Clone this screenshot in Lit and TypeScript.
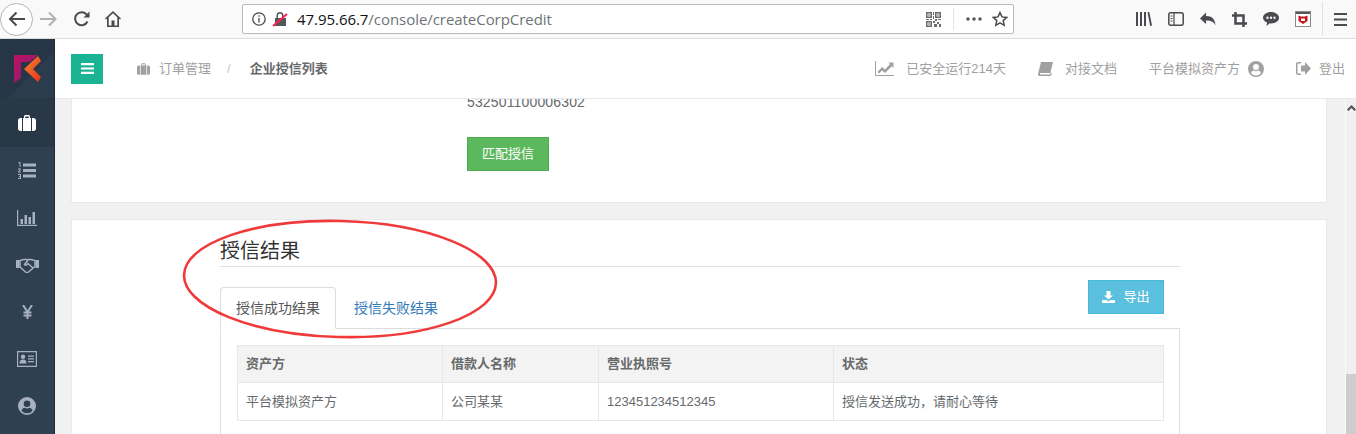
import { LitElement, html, css, svg } from "lit";
import { customElement } from "lit/decorators.js";

const icon = (w: number, h: number, vb: string, body: unknown) =>
  html`<svg width=${w} height=${h} viewBox=${vb} fill="currentColor">${body}</svg>`;

const briefcase = (w: number, h: number) =>
  icon(w, h, "0 0 18 16", svg`<path d="M6 3V1.5C6 .7 6.7 0 7.5 0h3c.8 0 1.5.7 1.5 1.5V3h1v13H5V3zM7.2 3h3.6V1.4H7.2zM4 3v13H2.5C1.1 16 0 14.9 0 13.500V5.500C0 4.100 1.100 3 2.500 3zM14 3h1.500C16.900 3 18 4.100 18 5.500v8c0 1.400-1.100 2.500-2.500 2.500H14z"/>`);

const userCircle = (s: number) =>
  icon(s, s, "0 0 18 18", svg`<path fill-rule="evenodd" d="M9 0a9 9 0 1 1 0 18A9 9 0 0 1 9 0zm0 3.500a3.300 3.300 0 1 0 0 6.600 3.300 3.300 0 0 0 0-6.600zM3.500 13.700A7 7 0 0 0 9 16.200a7 7 0 0 0 5.500-2.500c-.5-1.700-1.500-2.700-3-2.900-.7.500-1.600.8-2.500.8s-1.800-.3-2.500-.8c-1.500.2-2.500 1.200-3 2.900z"/>`);

@customElement("browser-bar")
export class BrowserBar extends LitElement {
  static override styles = css`
    :host {
      display: flex;
      align-items: center;
      height: 38px;
      background: #f9f9fa;
      border-bottom: 1px solid #dcdcdc;
      color: #4a4a4f;
      flex: none;
    }
    svg {
      display: block;
      flex: none;
    }
    .back {
      width: 31px;
      height: 31px;
      margin-left: 0;
      border: 1px solid #b4b4b4;
      border-radius: 50%;
      background: #fff;
      display: flex;
      align-items: center;
      justify-content: center;
      flex: none;
    }
    .fwd {
      margin-left: 7px;
      color: #b1b1b3;
    }
    .reload {
      margin-left: 17px;
    }
    .home {
      margin-left: 15px;
    }
    .url {
      margin-left: 121px;
      width: 772px;
      height: 30px;
      box-sizing: border-box;
      background: #fff;
      border: 1px solid #b9b9b9;
      border-radius: 2px;
      display: flex;
      align-items: center;
      flex: none;
    }
    .info {
      margin-left: 9px;
    }
    .lock {
      margin-left: 6px;
    }
    .addr {
      margin-left: 9px;
      font: 15px/28px "Open Sans", "Noto Sans", sans-serif;
      letter-spacing: -0.05px;
      color: #6f7377;
      flex: 1;
    }
    .addr b {
      font-weight: 400;
      color: #111;
    }
    .sep {
      width: 1px;
      height: 22px;
      background: #e2e2e2;
      margin: 0 12px 0 12px;
    }
    .star {
      margin: 0 5px 0 10px;
    }
    .tools {
      margin-left: 122px;
      display: flex;
      align-items: center;
      gap: 16px;
    }
    .bar-sep {
      width: 1px;
      height: 34px;
      background: #e0e0e1;
      margin-left: 11px;
    }
    .menu {
      margin-left: 11px;
    }
  `;

  override render() {
    return html`
      <div class="back">
        <svg width="18" height="16" viewBox="0 0 18 16" fill="none" stroke="currentColor" stroke-width="2"><path d="M17 8H2M8.500 1.500 2 8l6.500 6.500"/></svg>
      </div>
      <svg class="fwd" width="17" height="16" viewBox="0 0 17 16" fill="none" stroke="currentColor" stroke-width="2"><path d="M0 8h15M9 1.500 15.500 8 9 14.500"/></svg>
      <svg class="reload" width="16" height="16" viewBox="0 0 16 16" fill="none" stroke="currentColor" stroke-width="2"><path d="M13.500 10.500A6.500 6.500 0 1 1 12.500 3.300L15 5.500"/><path d="M15.500 .5v6h-6z" fill="currentColor" stroke="none"/></svg>
      <svg class="home" width="16" height="16" viewBox="0 0 16 16" fill="currentColor"><path fill-rule="evenodd" d="M8 0 16 7.500l-1 1-1-1V16H2V7.500l-1 1-1-1zM8 2.200 3.700 6.200v8.200h2.800V9.500h3v4.900h2.800V6.200z"/></svg>
      <div class="url">
        <svg class="info" width="14" height="14" viewBox="0 0 14 14" fill="none" stroke="currentColor" stroke-width="1.300"><circle cx="7" cy="7" r="6.200"/><path d="M7 6v4.500M7 3.200v1.500"/></svg>
        <svg class="lock" width="16" height="16" viewBox="0 0 16 16"><path fill="#55565a" d="M3 7h1.500V4.500a3.500 3.500 0 0 1 7 0V7H14v8H3zM6 7h4V4.500a2 2 0 0 0-4 0z"/><path stroke="#f9244f" stroke-width="2" d="M1 15 15 3"/></svg>
        <span class="addr"><b>47.95.66.7</b>/console/createCorpCredit</span>
        <svg width="15" height="15" viewBox="0 0 15 15" fill="#6b6b6f"><path fill-rule="evenodd" d="M0 0h6v6H0zm1.500 1.500v3h3v-3zM9 0h6v6H9zm1.500 1.500v3h3v-3zM0 9h6v6H0zm1.500 1.500v3h3v-3z"/><path d="M2.300 2.300h1.400v1.400H2.300zM11.300 2.300h1.400v1.400h-1.400zM2.300 11.300h1.400v1.400H2.300zM7 0h1v3H7zM7 4h1v3H7zM0 7h3v1H0zM4 7h2v1H4zM9 7h2v2H9zM12 7h3v1h-3zM7 9h2v2H7zM11 10h2v2h-2zM13 12h2v3h-2zM8 12h3v3H8z"/></svg>
        <span class="sep"></span>
        <svg width="16" height="4" viewBox="0 0 16 4" fill="#5b5b5f"><circle cx="2" cy="2" r="1.800"/><circle cx="8" cy="2" r="1.800"/><circle cx="14" cy="2" r="1.800"/></svg>
        <svg class="star" width="16" height="16" viewBox="0 0 16 16" fill="none" stroke="currentColor" stroke-width="1.500"><path d="M8 1.500l2 4.400 4.800.5-3.600 3.200 1 4.700L8 11.900l-4.200 2.400 1-4.700L1.200 6.400 6 5.900z"/></svg>
      </div>
      <div class="tools">
        <svg width="16" height="14" viewBox="0 0 16 14" fill="currentColor"><path d="M0 0h2v14H0zM4 0h2v14H4zM8 0h2v14H8zM11.500.3 13.300 0 16 13.500l-1.800.4z"/></svg>
        <svg width="16" height="14" viewBox="0 0 16 14" fill="none" stroke="currentColor" stroke-width="1.500"><rect x=".8" y=".8" width="14.400" height="12.400" rx="2"/><path d="M6 1v12M2.500 4H4.500M2.500 6.500H4.500M2.500 9H4.500" stroke-width="1.200"/></svg>
        <svg width="16" height="14" viewBox="0 0 16 14" fill="currentColor"><path d="M6 0v3.500c6 0 9 3 9.500 9.500-1.500-3.500-4-5-9.500-5v3.500L0 6z" transform="translate(0 .5)"/></svg>
        <svg width="15" height="15" viewBox="0 0 15 15" fill="none" stroke="currentColor" stroke-width="2.500"><path d="M3.500 0v11.500H15M0 3.500h11.500V15"/></svg>
        <svg width="16" height="14" viewBox="0 0 16 14" fill="currentColor"><path fill-rule="evenodd" d="M8 0c4.400 0 8 2.500 8 5.700s-3.600 5.700-8 5.700l-1.200-.1L3.500 14l.6-3.500C1.700 9.500 0 7.700 0 5.700 0 2.500 3.600 0 8 0zM4.500 4.500a1.200 1.200 0 1 0 0 2.400 1.200 1.200 0 0 0 0-2.400zm3.500 0a1.200 1.200 0 1 0 0 2.400 1.200 1.200 0 0 0 0-2.400zm3.500 0a1.200 1.200 0 1 0 0 2.400 1.200 1.200 0 0 0 0-2.400z"/></svg>
        <svg width="16" height="16" viewBox="0 0 16 16"><rect x=".5" y=".5" width="15" height="15" fill="#fff" stroke="#8a8a8e"/><rect x="1" y="1" width="14" height="2" fill="#55565a"/><path fill="#c5161d" d="M3.500 4.500 6 5.500h4l2.500-1V10L8 13 3.500 10zM6 7.500V10h4V7.500z"/></svg>
      </div>
      <span class="bar-sep"></span>
      <svg class="menu" width="13" height="13" viewBox="0 0 13 13" fill="currentColor"><path d="M0 0h13v2H0zM0 5.500h13v2H0zM0 11h13v2H0z"/></svg>
    `;
  }
}

@customElement("side-nav")
export class SideNav extends LitElement {
  static override styles = css`
    :host {
      display: block;
      width: 55px;
      box-sizing: border-box;
      flex: none;
      background: #2f4050;
      border-right: 1px solid #1f2c38;
      color: #a7b1c2;
    }
    .logo {
      height: 59px;
      background: linear-gradient(135deg, #263646 60%, #2b3c4c 60%);
      display: flex;
      align-items: center;
      justify-content: center;
    }
    .item {
      height: 47px;
      display: flex;
      align-items: center;
      justify-content: center;
    }
    .active {
      height: 49px;
      background: #293846;
      color: #fff;
    }
  `;

  override render() {
    return html`
      <div class="logo">
        <svg width="28" height="28" viewBox="0 0 28 28">
          <defs>
            <linearGradient id="lp" x1="0" y1="0" x2="1" y2="1"><stop offset="0" stop-color="#c0125f"/><stop offset="1" stop-color="#7f1d78"/></linearGradient>
            <linearGradient id="lo" x1="0" y1="0" x2="1" y2="1"><stop offset="0" stop-color="#f58a2a"/><stop offset="1" stop-color="#e8301e"/></linearGradient>
          </defs>
          <path fill="url(#lp)" d="M1 0h24l-8 7H8v16l-7 5z"/>
          <path fill="url(#lo)" d="M25 1 28 6l-8 8 8 8-3 5L11 14z"/>
        </svg>
      </div>
      <div class="item active">${briefcase(18, 16)}</div>
      <div class="item">
        <svg width="18" height="17" viewBox="0 0 18 17" fill="currentColor"><path d="M5 1.500h13v3H5zM5 7h13v3H5zM5 12.500h13v3H5zM.5 0h2v5h-1V1H.5zM0 6.500h3v1L1.200 9.500H3v1H0v-1L2 7.500H0zM0 12h3v5H0v-1h2v-1H1v-1h1v-1H0z"/></svg>
      </div>
      <div class="item">
        <svg width="20" height="16" viewBox="0 0 20 16" fill="currentColor"><path d="M0 0h1.200v14.800H20V16H0zM3.500 9H6v5H3.500zM7.500 5H10v9H7.500zM11.500 7H14v7h-2.500zM15.500 2H18v12h-2.500z"/></svg>
      </div>
      <div class="item">
        <svg width="23" height="16" viewBox="0 0 23 16" fill="none" stroke="currentColor" stroke-width="1.500"><path d="M4 3.500 8 2.500h2.500l1 .5 1-.5H15l4 1v6l-6.500 5.500c-1 .7-2 .7-3 0L4 10z"/><path d="M12 3 8.500 7.500c1 1.200 2 .8 3.500-1l5 4.500"/><path fill="currentColor" stroke="none" d="M0 3h3.500v8H0zM19.500 3H23v8h-3.500z"/></svg>
      </div>
      <div class="item">
        <svg width="11" height="14" viewBox="0 0 11 14" fill="none" stroke="currentColor" stroke-width="2"><path d="M1 0 5.500 7 10 0M5.500 7v7M1.500 7.500h8M1.500 10.500h8"/></svg>
      </div>
      <div class="item">
        <svg width="20" height="16" viewBox="0 0 20 16" fill="currentColor"><path fill-rule="evenodd" d="M0 0h20v16H0zm1.200 1.200v13.600h17.600V1.200z"/><path d="M6 3.500a2.200 2.200 0 1 1 0 4.400 2.200 2.200 0 0 1 0-4.400zM2.500 12.500c0-2.500 1.200-4 3.500-4s3.500 1.500 3.500 4zM11 4.500h6v1.200h-6zM11 7.300h6v1.200h-6zM11 10h6v1.200h-6z"/></svg>
      </div>
      <div class="item">${userCircle(18)}</div>
    `;
  }
}

@customElement("top-header")
export class TopHeader extends LitElement {
  static override styles = css`
    :host {
      display: flex;
      align-items: center;
      height: 60px;
      box-sizing: border-box;
      padding-left: 16px;
      background: #fff;
      border-bottom: 1px solid #e7eaec;
      font: 13px/16px "Liberation Sans", "Noto Sans CJK SC", sans-serif;
      color: #a0a0a0;
      flex: none;
    }
    svg {
      display: block;
      flex: none;
    }
    .toggle {
      width: 32px;
      height: 30px;
      background: #1ab394;
      color: #fff;
      display: flex;
      align-items: center;
      justify-content: center;
      flex: none;
    }
    .crumb-icon {
      margin-left: 34px;
      margin-right: 9px;
    }
    .slash {
      margin: 0 19px 0 16px;
      color: #c4c4c4;
    }
    .current {
      font-weight: 700;
      color: #676a6c;
    }
    .right {
      margin-left: auto;
      display: flex;
      align-items: center;
      padding-right: 11px;
    }
    .link {
      display: flex;
      align-items: center;
      margin-left: 32px;
    }
    .link span {
      margin-left: 12px;
    }
    .link span.first {
      margin: 0 8px 0 0;
    }
    .logout span {
      margin-left: 8px;
    }
  `;

  override render() {
    return html`
      <div class="toggle">
        <svg width="13" height="11" viewBox="0 0 13 11" fill="currentColor"><path d="M0 0h13v2.200H0zM0 4.400h13v2.200H0zM0 8.800h13V11H0z"/></svg>
      </div>
      <div class="crumb-icon">${briefcase(13, 12)}</div>
      <span>订单管理</span>
      <span class="slash">/</span>
      <span class="current">企业授信列表</span>
      <div class="right">
        <div class="link">
          <svg width="19" height="15" viewBox="0 0 19 15" fill="currentColor"><path d="M0 0h1v14h18v1H0z"/><path d="m2.500 11 4.500-5 3 2.500L15 3l-1.800-1.500H18.500V7L17 5.300 10 12 7 9.500 4 12.500z"/></svg>
          <span>已安全运行214天</span>
        </div>
        <div class="link">
          <svg width="15" height="14" viewBox="0 0 15 14" fill="currentColor"><path d="M3 0h12l-2.700 11H2.500C1.700 11 1.500 12 2.400 12.500H12l.8-2 1 .5-1 3H2C.5 14-.3 12.700.1 11.500z"/></svg>
          <span>对接文档</span>
        </div>
        <div class="link">
          <span class="first">平台模拟资产方</span>
          ${userCircle(16)}
        </div>
        <div class="link logout">
          <svg width="15" height="13" viewBox="0 0 15 13" fill="currentColor"><path d="M9 0v6.500-3H5v6h4V13l6-6.500L9 0z" /><path d="M5 0H2C.9 0 0 .9 0 2v9c0 1.100.9 2 2 2h3v-1.500H2.500c-.5 0-1-.4-1-1v-8c0-.5.400-1 1-1H5z"/></svg>
          <span>登出</span>
        </div>
      </div>
    `;
  }
}

@customElement("app-root")
export class AppRoot extends LitElement {
  static override styles = css`
    :host {
      display: flex;
      flex-direction: column;
      position: relative;
      width: 1356px;
      height: 434px;
      overflow: hidden;
      font: 13px/16px "Liberation Sans", "Noto Sans CJK SC", sans-serif;
      color: #676a6c;
    }
    .body {
      display: flex;
      flex: 1;
      min-height: 0;
    }
    .page {
      flex: 1;
      display: flex;
      flex-direction: column;
      min-width: 0;
    }
    .scroll {
      flex: 1;
      display: flex;
      min-height: 0;
      overflow: hidden;
      background: #f1f1f2;
    }
    .content {
      flex: 1;
      padding: 0 18px 0 16px;
      min-width: 0;
    }
    .card {
      background: #fff;
      border: 1px solid #e7eaec;
    }
    .match {
      margin-top: -20px;
      height: 124px;
      box-sizing: border-box;
      padding: 14px 0 0 395px;
    }
    .licence {
      font-size: 14px;
      letter-spacing: 0.15px;
      color: #676a6c;
    }
    .btn {
      display: flex;
      align-items: center;
      justify-content: center;
      height: 34px;
      box-sizing: border-box;
      color: #fff;
      font-size: 13px;
    }
    .green {
      margin-top: 27px;
      width: 82px;
      background: #5cb85c;
      border: 1px solid #4cae4c;
    }
    .result {
      margin-top: 16px;
      padding: 0 146px 0 148px;
      height: 300px;
    }
    h3 {
      margin: 0;
      padding-top: 16px;
      height: 30px;
      line-height: 30px;
      font-size: 20px;
      font-weight: 400;
      color: #333;
      border-bottom: 1px solid #e1e1e1;
    }
    .tabs {
      margin-top: 20px;
      height: 42px;
      box-sizing: border-box;
      display: flex;
      border-bottom: 1px solid #ddd;
    }
    .tab {
      height: 42px;
      box-sizing: border-box;
      padding: 12px 15px;
      border: 1px solid transparent;
      color: #337ab7;
      font-size: 14px;
      line-height: 16px;
      margin-left: 2px;
    }
    .tab.on {
      margin-left: 0;
      color: #555;
      background: #fff;
      border-color: #ddd #ddd #fff;
      border-radius: 4px 4px 0 0;
    }
    .export {
      margin: -7px 16px 0 auto;
      width: 76px;
      gap: 8px;
      background: #5bc0de;
      border: 1px solid #46b8da;
    }
    .pane {
      padding: 16px;
      border: 1px solid #ddd;
      border-top: 0;
      height: 200px;
    }
    table {
      width: 926px;
      table-layout: fixed;
      border-collapse: collapse;
    }
    th,
    td {
      height: 37px;
      box-sizing: border-box;
      padding: 0 8px;
      border: 1px solid #e7e7e7;
      text-align: left;
      font-size: 13px;
    }
    tr + tr td {
      height: 38px;
    }
    th {
      background: #f3f3f3;
      font-weight: 700;
      color: #676a6c;
    }
    .scrollbar {
      width: 11px;
      flex: none;
      background: #f0f0f0;
      display: flex;
      flex-direction: column;
      align-items: center;
      border-left: 1px solid #fafafa;
      box-sizing: border-box;
    }
    .scrollbar svg {
      margin-top: 6px;
    }
    .thumb {
      margin-top: auto;
      width: 100%;
      height: 60px;
      background: #cdcdcd;
    }
    .ring {
      position: absolute;
      left: 180px;
      top: 217px;
      pointer-events: none;
    }
  `;

  override render() {
    return html`
      <browser-bar></browser-bar>
      <div class="body">
        <side-nav></side-nav>
        <div class="page">
          <top-header></top-header>
          <div class="scroll">
            <div class="content">
              <div class="card match">
                <div class="licence">532501100006302</div>
                <div class="btn green">匹配授信</div>
              </div>
              <div class="card result">
                <h3>授信结果</h3>
                <div class="tabs">
                  <div class="tab on">授信成功结果</div>
                  <div class="tab">授信失败结果</div>
                  <div class="btn export">
                    <svg width="13" height="12" viewBox="0 0 13 12" fill="currentColor"><path d="M4.500 0h4v4.500H11L6.500 8.500 2 4.500h2.500zM0 9h4.500l2 1.500 2-1.500H13v3H0z"/></svg>
                    导出
                  </div>
                </div>
                <div class="pane">
                  <table>
                    <colgroup><col style="width:205px" /><col style="width:156px" /><col style="width:235px" /><col style="width:330px" /></colgroup>
                    <tr><th>资产方</th><th>借款人名称</th><th>营业执照号</th><th>状态</th></tr>
                    <tr><td>平台模拟资产方</td><td>公司某某</td><td>123451234512345</td><td>授信发送成功，请耐心等待</td></tr>
                  </table>
                </div>
              </div>
            </div>
            <div class="scrollbar">
              <svg width="9" height="6" viewBox="0 0 9 6" fill="none" stroke="#505050" stroke-width="2"><path d="M.7 5.300 4.500 1.500l3.800 3.800"/></svg>
              <div class="thumb"></div>
            </div>
          </div>
        </div>
      </div>
      <svg class="ring" width="322" height="125" viewBox="0 0 322 125" fill="none">
        <ellipse cx="160" cy="62" rx="156" ry="58" stroke="#f03a3a" stroke-width="2.600" transform="rotate(1.500 160 62)" />
      </svg>
    `;
  }
}
